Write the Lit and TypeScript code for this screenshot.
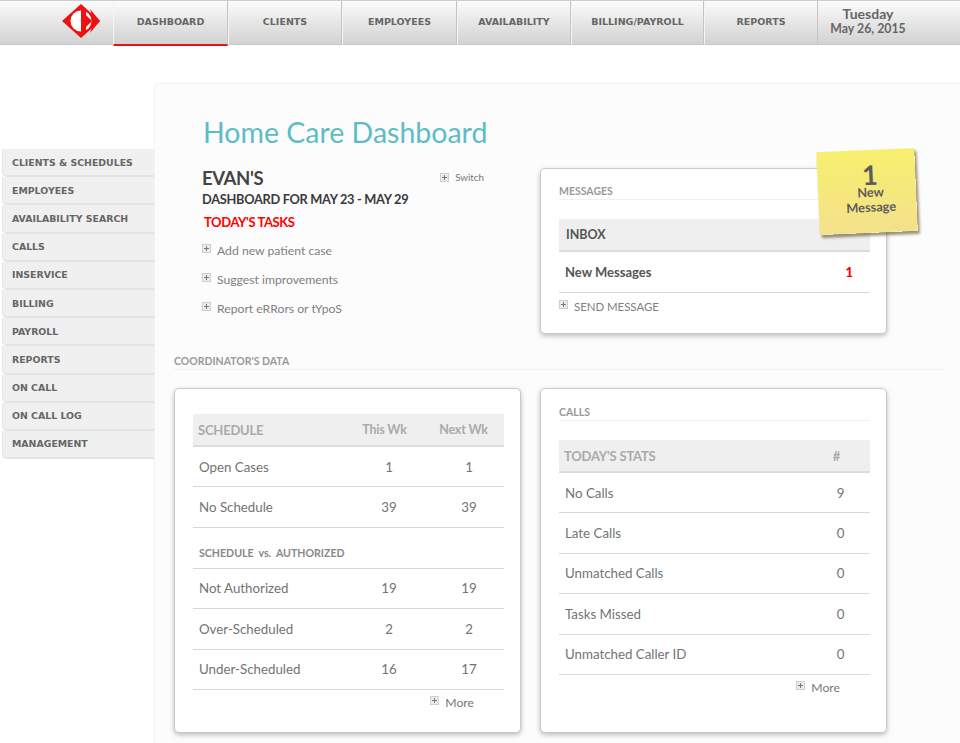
import { LitElement, html, css } from "lit";
import { customElement } from "lit/decorators.js";

const plus = html`<svg class="plus" viewBox="0 0 9 9" width="9" height="9"><rect x="0.5" y="0.5" width="8" height="8" fill="#ececec" stroke="#cfcfcf"/><path d="M2 4.5h5M4.5 2v5" stroke="#777" stroke-width="1"/></svg>`;

const tabs: [string, number][] = [
  ["DASHBOARD", 115], ["CLIENTS", 114], ["EMPLOYEES", 115], ["AVAILABILITY", 114], ["BILLING/PAYROLL", 133], ["REPORTS", 114],
];
const side = ["CLIENTS & SCHEDULES", "EMPLOYEES", "AVAILABILITY SEARCH", "CALLS", "INSERVICE", "BILLING", "PAYROLL", "REPORTS", "ON CALL", "ON CALL LOG", "MANAGEMENT"];
const tasks = ["Add new patient case", "Suggest improvements", "Report eRRors or tYpoS"];
const sched1 = [["Open Cases", "1", "1"], ["No Schedule", "39", "39"]];
const sched2 = [["Not Authorized", "19", "19"], ["Over-Scheduled", "2", "2"], ["Under-Scheduled", "16", "17"]];
const calls = [["No Calls", "9"], ["Late Calls", "0"], ["Unmatched Calls", "0"], ["Tasks Missed", "0"], ["Unmatched Caller ID", "0"]];

@customElement("app-root")
export class AppRoot extends LitElement {
  static styles = css`
    :host { display: block; width: 960px; height: 743px; overflow: hidden; background: #fff; font-family: "Lato", "Noto Sans", sans-serif; color: #666; }
    * { box-sizing: border-box; }
    .top { display: flex; height: 46px; border-top: 1px solid #ccc; }
    .brand { width: 113px; height: 44px; background: linear-gradient(#fbfbfb, #d2d2d2); border-bottom: 1px solid #c8c8c8; display: flex; justify-content: flex-end; padding: 3px 13px 0 0; }
    .tab { display: flex; align-items: center; justify-content: center; padding-bottom: 2px; background: linear-gradient(#fbfbfb, #d2d2d2); border-left: 1px solid #f4f4f4; border-right: 1px solid #c4c4c4; border-bottom: 1px solid #c8c8c8; height: 44px; font: bold 9.5px "DejaVu Sans", sans-serif; color: #666; }
    .tab.on { height: 45px; border-bottom: 2px solid #ee1111; }
    .date { flex: 1; min-width: 0; height: 44px; background: linear-gradient(#fbfbfb, #d2d2d2); border-bottom: 1px solid #c8c8c8; padding: 5px 0 0 12px; color: #666; text-align: center; font-weight: bold; line-height: 15px; }
    .date div { width: 76px; white-space: nowrap; }
    .d1 { font-size: 14px; }
    .d2 { font-size: 12.3px; }
    .body { display: flex; align-items: flex-start; padding-top: 37px; }
    .side { width: 154px; flex: none; padding: 66px 0 0 2px; }
    .side div { height: 28.2px; display: flex; align-items: center; padding-left: 9px; background: #f0f0f0; border-bottom: 2px solid #e4e4e4; border-left: 1px solid #e6e6e6; border-radius: 0 0 0 5px; font: bold 9.4px "DejaVu Sans", sans-serif; color: #666; white-space: nowrap; }
    .panel { flex: 1; height: 700px; background: #fcfcfc; border: 1px solid #f1f1f1; border-right: 0; border-radius: 6px 0 0 0; padding: 28px 16px 0 19px; position: relative; }
    h1 { margin: 0 0 0 29px; font: 400 28.5px/40px "Lato", sans-serif; color: #5dbcc6; white-space: nowrap; }
    .row { display: flex; gap: 19px; }
    .intro { width: 347px; padding: 14px 0 0 28px; position: relative; }
    .evan { font: bold 18.5px/24px "Lato", sans-serif; color: #444; letter-spacing: -0.4px; }
    .range { font: bold 12.8px/19px "Lato", sans-serif; color: #3a3a3a; letter-spacing: -0.3px; }
    .today { font: bold 13px/18px "Lato", sans-serif; color: #f00; margin: 4px 0 5px 2px; letter-spacing: -0.4px; }
    .task { display: flex; align-items: center; gap: 6px; height: 29px; font: 12.2px "Lato", sans-serif; color: #808080; }
    .plus { flex: none; }
    .task .plus { margin-top: -4px; }
    .switch { position: absolute; right: 37px; top: 19px; display: flex; align-items: center; gap: 6px; font: 9.8px "Lato", sans-serif; color: #777; }
    .card { width: 347px; background: #fff; border: 1px solid #c9c9c9; border-radius: 5px; box-shadow: 0 2px 5px rgba(0,0,0,.25); padding: 0 16px 0 18px; }
    .msg { height: 166px; margin-top: 16px; position: relative; }
    .label { font: bold 10.5px/14px "Lato", sans-serif; color: #999; }
    .cardlabel { padding-top: 15px; height: 31px; border-bottom: 1px solid #f0f0f0; }
    .inbox { margin-top: 19px; height: 33px; background: #efefef; border-bottom: 2px solid #dcdcdc; padding-left: 7px; font: bold 12.5px/32px "Lato", sans-serif; color: #555; }
    .newm { height: 41px; border-bottom: 1px solid #d8d8d8; display: flex; justify-content: space-between; align-items: center; padding: 0 17px 0 6px; font: bold 13px "Lato", sans-serif; color: #555; }
    .newm b { color: #f00; font-size: 13px; }
    .send { display: flex; align-items: center; gap: 6px; height: 27px; font: 11.4px "Lato", sans-serif; color: #808080; }
    .send .plus { margin-top: -4px; }
    .note { position: absolute; left: 277px; top: -19px; width: 98px; height: 83px; transform: rotate(-2.5deg); background: linear-gradient(#f8ef6e, #f3e18c); box-shadow: 2px 3px 3px rgba(80,70,30,.6); text-align: center; color: #5c5c5c; padding: 15px 0 0 7px; font: bold 12.8px/15px "Lato", sans-serif; }
    .note .big { font-size: 27px; line-height: 20px; }
    .section { margin: 19px 0 0; height: 17px; padding-top: 1px; border-bottom: 1px solid #f1f1f1; }
    .data { margin-top: 18px; }
    .tall { height: 345px; }
    .rows { padding-top: 25px; }
    .hdr, .tr { display: grid; align-items: center; }
    .s { grid-template-columns: 156px 80px 75px; }
    .c { grid-template-columns: 256px 55px; }
    .hdr { height: 33px; background: #efefef; border-bottom: 2px solid #dcdcdc; font: bold 13px "Lato", sans-serif; color: #aaa; letter-spacing: -0.2px; }
    .hdr span:first-child { padding-left: 5px; }
    .tr { height: 40.4px; border-bottom: 1px solid #d8d8d8; font: 13.3px "Lato", sans-serif; color: #737373; }
    .tr span:first-child { padding-left: 6px; }
    .num { text-align: center; }
    .s .num:last-child { padding-left: 5px; }
    .c .num { padding-right: 4px; }
    .hdr.s .num { font-size: 12.5px; padding: 0 9px 0 0; }
    .hdr.s .num:last-child { padding: 0 6px 0 0; }
    .hdr.c .num { padding-right: 12px; }
    .sub { height: 41px; border-bottom: 1px solid #d8d8d8; padding: 18px 0 0 6px; font: bold 10.6px/14px "Lato", sans-serif; color: #888; }
    .more { display: flex; justify-content: flex-end; align-items: center; gap: 6px; height: 25px; padding-right: 30px; font: 12.2px "Lato", sans-serif; color: #777; }
    .more .plus { margin-top: -4px; }
    .callslabel { padding-top: 16px; height: 32px; border-bottom: 1px solid #f0f0f0; margin-bottom: 19px; }
  `;

  render() {
    return html`
      <div class="top">
        <div class="brand">
          <svg width="38" height="34" viewBox="0 0 38 34">
            <path d="M19 0 38 17 19 34 0 17Z" fill="#ee1111"/>
            <circle cx="19" cy="17" r="10.5" fill="#fff"/>
            <path d="M19 6h5v5l6 6-6 6v5h-5Z" fill="#ee1111"/>
            <path d="M28 5l10 12-10 12 4-12Z" fill="#ee1111"/>
          </svg>
        </div>
        ${tabs.map(([t, w], i) => html`<div class="tab ${i === 0 ? "on" : ""}" style="width:${w}px">${t}</div>`)}
        <div class="date"><div class="d1">Tuesday</div><div class="d2">May 26, 2015</div></div>
      </div>
      <div class="body">
        <nav class="side">${side.map((s) => html`<div>${s}</div>`)}</nav>
        <main class="panel">
          <h1>Home Care Dashboard</h1>
          <div class="row">
            <div class="intro">
              <div class="evan">EVAN'S</div>
              <div class="range">DASHBOARD FOR MAY 23 - MAY 29</div>
              <div class="today">TODAY'S TASKS</div>
              ${tasks.map((t) => html`<div class="task">${plus}<span>${t}</span></div>`)}
              <div class="switch">${plus}<span>Switch</span></div>
            </div>
            <section class="card msg">
              <div class="label cardlabel">MESSAGES</div>
              <div class="inbox">INBOX</div>
              <div class="newm"><span>New Messages</span><b>1</b></div>
              <div class="send">${plus}<span>SEND MESSAGE</span></div>
              <div class="note"><div class="big">1</div>New<br />Message</div>
            </section>
          </div>
          <div class="label section">COORDINATOR'S DATA</div>
          <div class="row data">
            <section class="card tall">
              <div class="rows">
                <div class="hdr s"><span>SCHEDULE</span><span class="num">This Wk</span><span class="num">Next Wk</span></div>
                ${sched1.map((r) => html`<div class="tr s"><span>${r[0]}</span><span class="num">${r[1]}</span><span class="num">${r[2]}</span></div>`)}
                <div class="sub">SCHEDULE &nbsp;vs.&nbsp; AUTHORIZED</div>
                ${sched2.map((r) => html`<div class="tr s"><span>${r[0]}</span><span class="num">${r[1]}</span><span class="num">${r[2]}</span></div>`)}
              </div>
              <div class="more">${plus}<span>More</span></div>
            </section>
            <section class="card tall">
              <div class="label callslabel">CALLS</div>
              <div class="hdr c"><span>TODAY'S STATS</span><span class="num">#</span></div>
              ${calls.map((r) => html`<div class="tr c"><span>${r[0]}</span><span class="num">${r[1]}</span></div>`)}
              <div class="more">${plus}<span>More</span></div>
            </section>
          </div>
        </main>
      </div>
    `;
  }
}
